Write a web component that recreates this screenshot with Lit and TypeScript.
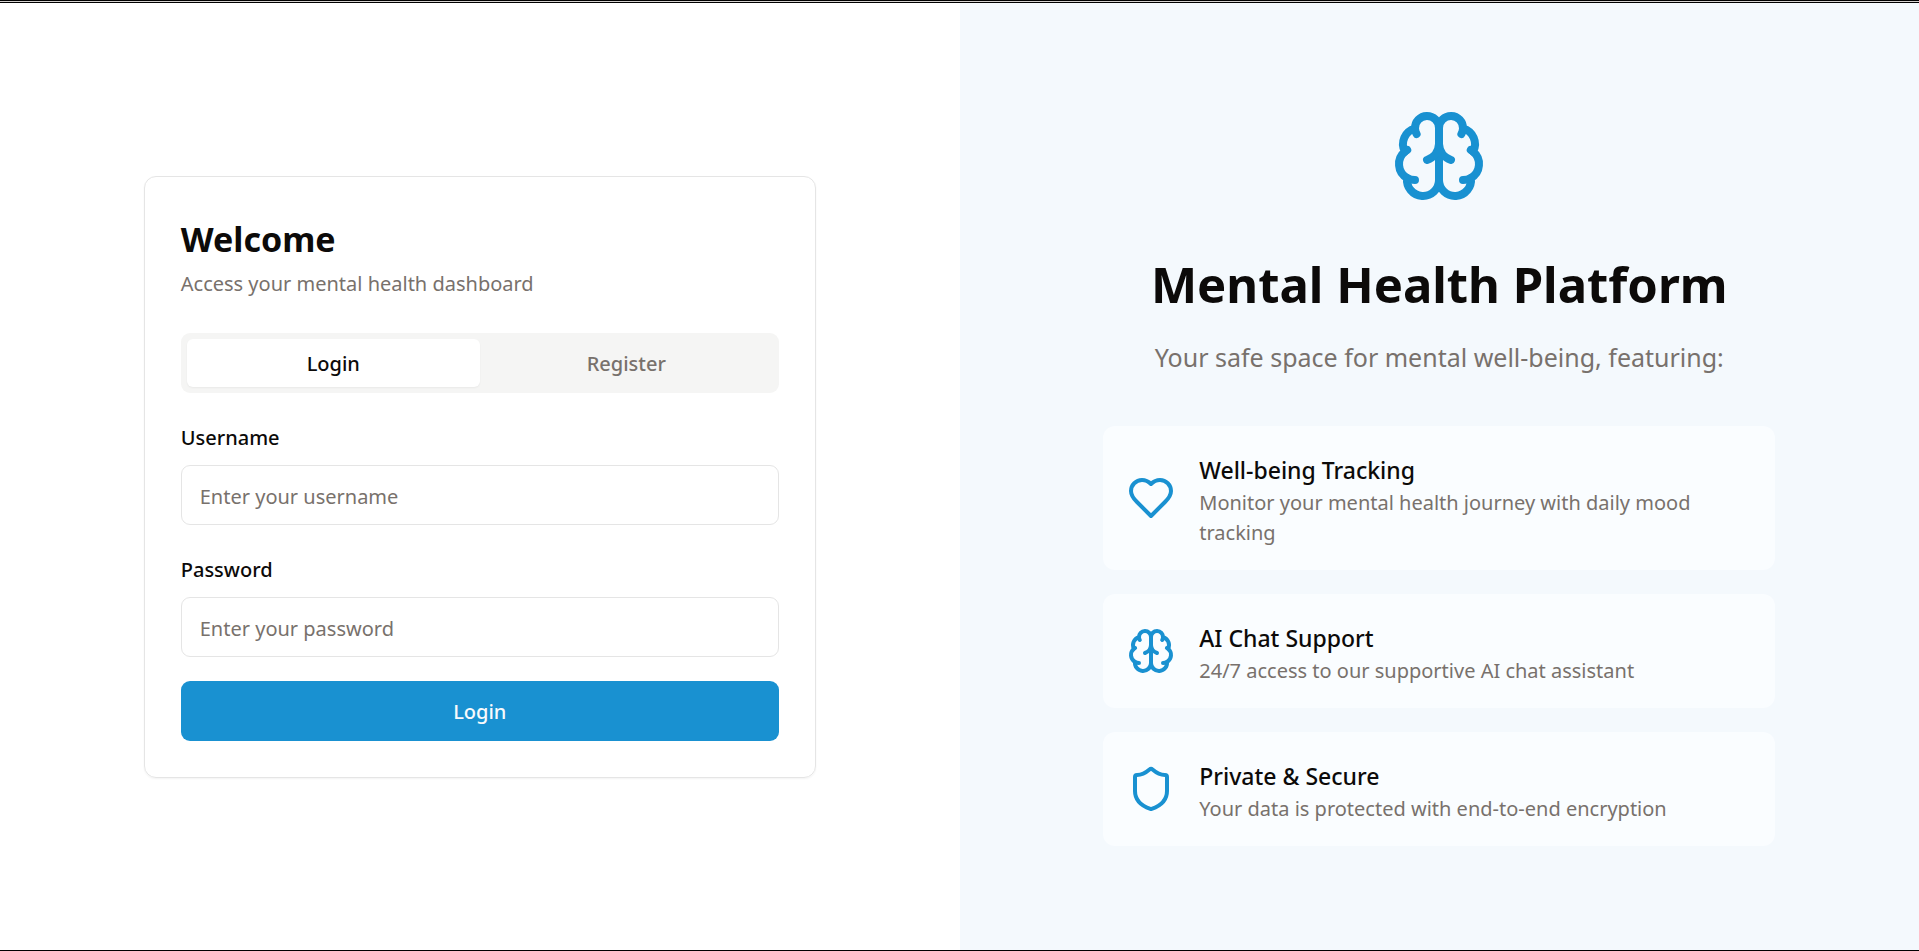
import { LitElement, html, css, svg } from "lit";
import { customElement, property, state } from "lit/decorators.js";

const icons = {
  brain: svg`
    <path d="M12 5a3 3 0 1 0-5.997.125 4 4 0 0 0-2.526 5.77 4 4 0 0 0 .556 6.588A4 4 0 1 0 12 18Z" />
    <path d="M12 5a3 3 0 1 1 5.997.125 4 4 0 0 1 2.526 5.77 4 4 0 0 1-.556 6.588A4 4 0 1 1 12 18Z" />
    <path d="M15 13a4.5 4.5 0 0 1-3-4 4.5 4.5 0 0 1-3 4" />
    <path d="M17.599 6.5a3 3 0 0 0 .399-1.375" />
    <path d="M6.003 5.125A3 3 0 0 0 6.401 6.5" />
    <path d="M3.477 10.896a4 4 0 0 1 .585-.396" />
    <path d="M19.938 10.5a4 4 0 0 1 .585.396" />
    <path d="M6 18a4 4 0 0 1-1.967-.516" />
    <path d="M19.967 17.484A4 4 0 0 1 18 18" />
  `,
  heart: svg`
    <path d="M19 14c1.49-1.46 3-3.21 3-5.5A5.5 5.5 0 0 0 16.5 3c-1.76 0-3 .5-4.5 2-1.5-1.5-2.74-2-4.5-2A5.5 5.5 0 0 0 2 8.5c0 2.3 1.5 4.05 3 5.5l7 7Z" />
  `,
  shield: svg`
    <path d="M20 13c0 5-3.5 7.5-7.66 8.95a1 1 0 0 1-.67-.01C7.5 20.5 4 18 4 13V6a1 1 0 0 1 1-1c2 0 4.5-1.2 6.24-2.72a1.17 1.17 0 0 1 1.52 0C14.51 3.81 17 5 19 5a1 1 0 0 1 1 1z" />
  `,
};

type IconName = keyof typeof icons;

@customElement("line-icon")
class LineIcon extends LitElement {
  static styles = css`
    :host {
      display: block;
      flex: none;
      color: #1991d1;
    }
    svg {
      display: block;
      width: 100%;
      height: 100%;
      fill: none;
      stroke: currentColor;
      stroke-width: 2;
      stroke-linecap: round;
      stroke-linejoin: round;
    }
  `;

  @property() name: IconName = "brain";

  render() {
    return html`<svg viewBox="0 0 24 24" aria-hidden="true">${icons[this.name]}</svg>`;
  }
}

interface Feature {
  icon: IconName;
  title: string;
  text: string;
}

const features: Feature[] = [
  { icon: "heart", title: "Well-being Tracking", text: "Monitor your mental health journey with daily mood tracking" },
  { icon: "brain", title: "AI Chat Support", text: "24/7 access to our supportive AI chat assistant" },
  { icon: "shield", title: "Private & Secure", text: "Your data is protected with end-to-end encryption" },
];

@customElement("app-root")
class AppRoot extends LitElement {
  static styles = css`
    :host {
      display: flex;
      flex-direction: column;
      box-sizing: border-box;
      min-height: 100vh;
      border-bottom: 1px solid #000;
      background: #fff;
      color: #0c0a09;
      font: 400 20px/30px "Segoe UI", "Noto Sans", sans-serif;
    }
    * {
      box-sizing: border-box;
    }
    h1,
    h2,
    h3,
    p {
      margin: 0;
    }
    .edge {
      height: 3px;
      border: solid #000;
      border-width: 1px 0;
      background: #d6d3d1;
    }
    .page {
      flex: 1;
      display: grid;
      grid-template-columns: 1fr 1fr;
    }
    .side {
      display: flex;
      align-items: center;
      justify-content: center;
      padding: 48px;
    }
    .intro {
      background: #f4f9fd;
    }
    .card {
      width: 100%;
      max-width: 672px;
      padding: 36px;
      border: 1px solid #e5e5e5;
      border-radius: 12px;
      box-shadow: 0 1px 2px rgb(0 0 0 / 0.05);
    }
    .card-title {
      font-size: 34px;
      line-height: 52px;
      font-weight: 700;
    }
    .muted {
      color: #78716c;
    }
    .card-head {
      display: grid;
      gap: 4px;
    }
    .tabs {
      display: grid;
      grid-template-columns: 1fr 1fr;
      height: 60px;
      margin-top: 34px;
      padding: 6px;
      border-radius: 9px;
      background: #f5f5f4;
    }
    button,
    input {
      font: inherit;
    }
    button {
      padding: 3px 18px 0;
      border: 0;
      font-weight: 500;
      cursor: pointer;
    }
    .tab {
      border-radius: 6px;
      background: transparent;
      color: #78716c;
    }
    .tab[aria-selected="true"] {
      background: #fff;
      color: #0c0a09;
      box-shadow: 0 1px 2px rgb(0 0 0 / 0.05);
    }
    form {
      display: grid;
      gap: 24px;
      margin-top: 24px;
    }
    .field {
      display: grid;
      gap: 12px;
    }
    label {
      padding-top: 6px;
      font-weight: 500;
    }
    input {
      width: 100%;
      height: 60px;
      padding: 3px 18px 0;
      border: 1px solid #e5e5e5;
      border-radius: 9px;
      background: #fff;
      color: inherit;
    }
    input::placeholder {
      color: #78716c;
      opacity: 1;
    }
    .submit {
      height: 60px;
      border-radius: 9px;
      background: #1991d1;
      color: #f8fafc;
    }
    .about {
      display: flex;
      flex-direction: column;
      align-items: center;
      width: 100%;
      max-width: 672px;
    }
    .logo {
      width: 96px;
      height: 96px;
      margin-bottom: 48px;
    }
    .headline {
      font-size: 49px;
      line-height: 64px;
      font-weight: 700;
      text-align: center;
    }
    .lead {
      margin-top: 20px;
      font-size: 25px;
      line-height: 42px;
      text-align: center;
    }
    .features {
      display: grid;
      gap: 24px;
      width: 100%;
      margin: 48px 0 0;
      padding: 0;
      list-style: none;
    }
    .feature {
      display: flex;
      align-items: center;
      gap: 24px;
      padding: 24px;
      border-radius: 12px;
      background: #fafdff;
    }
    .feature-icon {
      width: 48px;
      height: 48px;
    }
    .feature-title {
      font-size: 23px;
      line-height: 36px;
      font-weight: 500;
    }
    .feature-text {
      margin: 2px 0 -2px;
    }
  `;

  @state() private tab = "Login";

  private field(id: string, label: string, type: string) {
    return html`
      <div class="field">
        <label for=${id}>${label}</label>
        <input id=${id} type=${type} placeholder=${`Enter your ${id}`} />
      </div>
    `;
  }

  render() {
    return html`
      <div class="edge"></div>
      <div class="page">
        <main class="side">
          <section class="card">
            <header class="card-head">
              <h2 class="card-title">Welcome</h2>
              <p class="muted">Access your mental health dashboard</p>
            </header>
            <div class="tabs" role="tablist">
              ${["Login", "Register"].map(
                (name) => html`
                  <button
                    class="tab"
                    type="button"
                    role="tab"
                    aria-selected=${name === this.tab ? "true" : "false"}
                    @click=${() => (this.tab = name)}
                  >${name}</button>
                `,
              )}
            </div>
            <form @submit=${(e: Event) => e.preventDefault()}>
              ${this.field("username", "Username", "text")}
              ${this.field("password", "Password", "password")}
              <button class="submit" type="submit">${this.tab}</button>
            </form>
          </section>
        </main>
        <aside class="side intro">
          <div class="about">
            <line-icon class="logo" name="brain"></line-icon>
            <h1 class="headline">Mental Health Platform</h1>
            <p class="lead muted">Your safe space for mental well-being, featuring:</p>
            <ul class="features">
              ${features.map(
                (f) => html`
                  <li class="feature">
                    <line-icon class="feature-icon" name=${f.icon}></line-icon>
                    <div class="feature-text">
                      <h3 class="feature-title">${f.title}</h3>
                      <p class="muted">${f.text}</p>
                    </div>
                  </li>
                `,
              )}
            </ul>
          </div>
        </aside>
      </div>
    `;
  }
}
